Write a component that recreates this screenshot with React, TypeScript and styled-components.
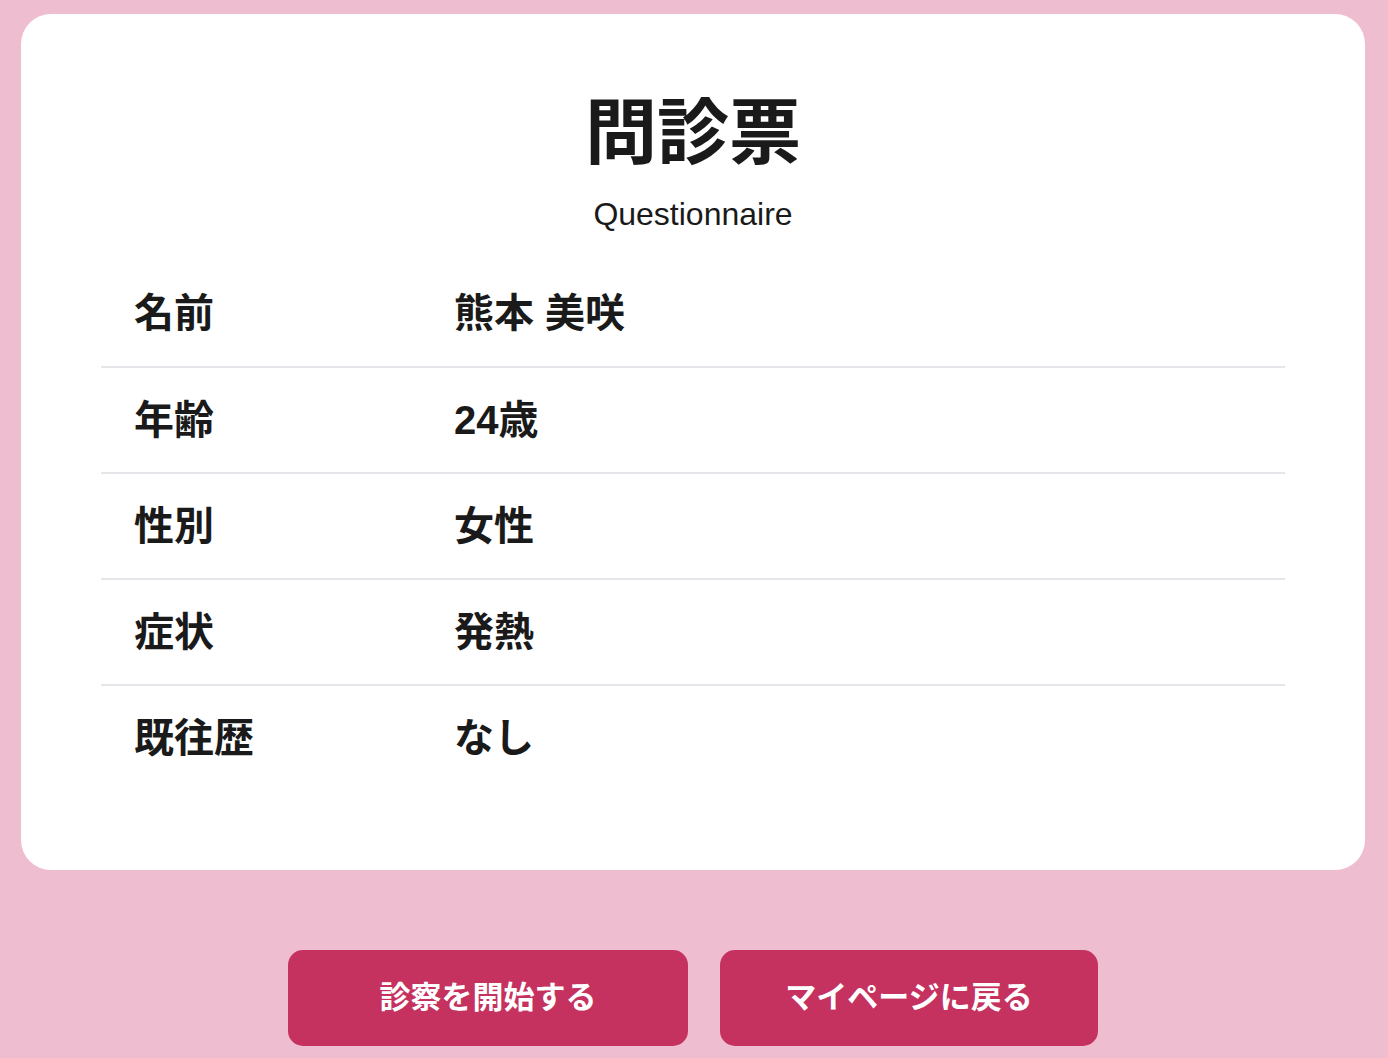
import styled, { createGlobalStyle } from 'styled-components';

const GlobalStyle = createGlobalStyle`
  html, body {
    margin: 0;
    padding: 0;
    background: #efbdd0;
  }
  body {
    font-family: 'Liberation Sans', 'Noto Sans CJK JP', sans-serif;
    color: #1a1a1a;
  }
`;

const rows: [string, string][] = [
  ['名前', '熊本 美咲'],
  ['年齢', '24歳'],
  ['性別', '女性'],
  ['症状', '発熱'],
  ['既往歴', 'なし'],
];

function App() {
  return (
    <>
      <GlobalStyle />
      <Page>
        <Card>
          <Title>問診票</Title>
          <Subtitle>Questionnaire</Subtitle>
          <Table>
            <tbody>
              {rows.map(([label, value]) => (
                <Row key={label}>
                  <Label>{label}</Label>
                  <Value>{value}</Value>
                </Row>
              ))}
            </tbody>
          </Table>
        </Card>
        <Actions>
          <ActionButton $width={400}>診察を開始する</ActionButton>
          <ActionButton $width={378}>マイページに戻る</ActionButton>
        </Actions>
      </Page>
    </>
  );
}

const Page = styled.div`
  padding: 14px 23px 40px 21px;
  display: flex;
  flex-direction: column;
  align-items: stretch;
`;

const Card = styled.div`
  background: #ffffff;
  border-radius: 30px;
  padding: 76px 80px 79px;
  display: flex;
  flex-direction: column;
  align-items: center;
`;

const Title = styled.h1`
  margin: 0;
  font-size: 72px;
  line-height: 86px;
  font-weight: 700;
  letter-spacing: 0;
`;

const Subtitle = styled.p`
  margin: 19px 0 0;
  font-size: 32px;
  line-height: 38px;
  font-weight: 400;
`;

const Table = styled.table`
  margin-top: 28px;
  width: 100%;
  border-collapse: collapse;
`;

const Row = styled.tr`
  height: 106px;
  border-bottom: 2px solid #e6e6ea;

  &:last-child {
    border-bottom: none;
  }
`;

const Label = styled.th`
  width: 320px;
  box-sizing: border-box;
  padding: 0 33px 7px;
  text-align: left;
  font-size: 40px;
  font-weight: 700;
`;

const Value = styled.td`
  padding: 0 33px 7px;
  text-align: left;
  font-size: 40px;
  font-weight: 700;
`;

const Actions = styled.div`
  margin-top: 80px;
  display: flex;
  justify-content: center;
  gap: 32px;
`;

const ActionButton = styled.button<{ $width: number }>`
  width: ${({ $width }) => $width}px;
  height: 96px;
  border: none;
  border-radius: 15px;
  background: #c5325f;
  color: #ffffff;
  font-family: 'Liberation Sans', 'Noto Sans CJK JP', sans-serif;
  font-size: 31px;
  font-weight: 700;
  padding: 0 0 7px;
  cursor: pointer;
`;

export default App;
